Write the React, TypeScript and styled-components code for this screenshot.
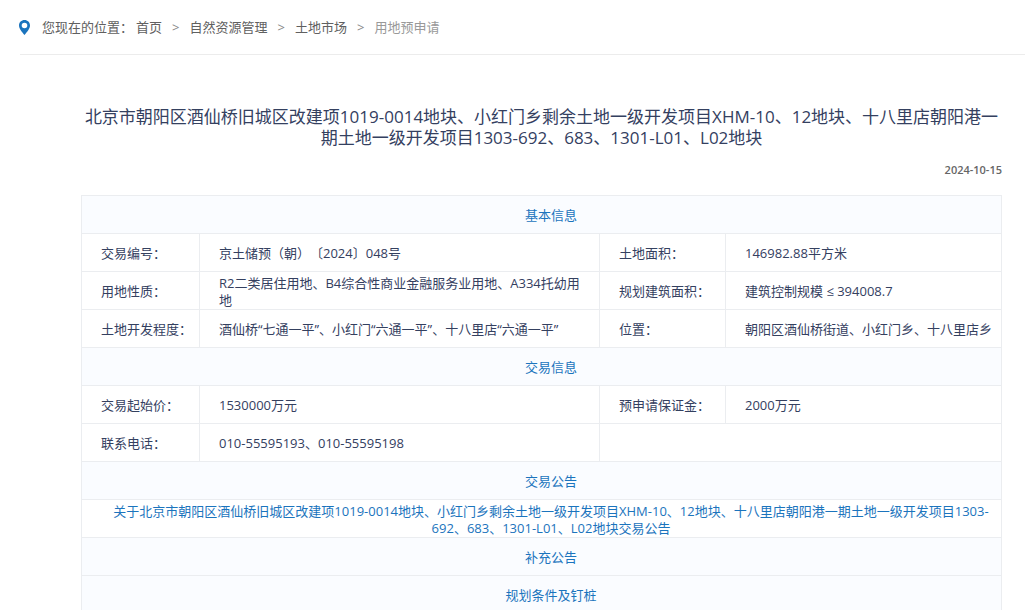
import React from "react";
import styled, { createGlobalStyle } from "styled-components";

const GlobalStyle = createGlobalStyle`
  * {
    box-sizing: border-box;
  }
  body {
    margin: 0;
    background: #fff;
    color: #34405f;
    font-family: "Open Sans", "Noto Sans CJK SC", sans-serif;
    font-size: 13px;
    font-weight: 400;
    line-height: 17px;
    text-spacing-trim: space-all;
  }
`;

const Page = styled.div`
  padding: 0 7px 0 20px;
`;

const Breadcrumb = styled.nav`
  display: flex;
  align-items: center;
  height: 55px;
  border-bottom: 1px solid #ececec;
  color: #606060;
`;

const Pin = styled.svg`
  display: block;
  flex: none;
  width: 11px;
  height: 15px;
  margin: 0 12px 0 -1px;
`;

const CrumbList = styled.ol`
  display: flex;
  gap: 10px;
  margin: 0 0 0 3px;
  padding: 0;
  list-style: none;
`;

const Crumb = styled.li`
  display: flex;
  gap: 10px;

  & + &::before {
    content: ">";
    color: #888;
  }
`;

const CrumbLink = styled.a`
  color: #606060;
  text-decoration: none;
`;

const CurrentCrumb = styled.span`
  color: #999;
`;

const Article = styled.main`
  padding: 51px 23px 0 61px;
`;

const Title = styled.h1`
  margin: 0;
  font-size: 17px;
  font-weight: inherit;
  line-height: 21px;
  text-align: center;
`;

const PublishDate = styled.time`
  display: block;
  margin: 13px 0 17px;
  color: #666;
  font-size: 11px;
  font-weight: 600;
  text-align: right;
`;

const InfoTable = styled.table`
  width: 100%;
  border-collapse: collapse;
  table-layout: fixed;
`;

const Column = styled.col<{ $width?: string }>`
  width: ${({ $width }) => $width ?? "auto"};
`;

const Row = styled.tr`
  height: 38px;
`;

const SectionHead = styled.th`
  padding: 2px 0 0 19px;
  border: 1px solid #ebedf0;
  background: #fafcff;
  color: #1b74bd;
  font-weight: inherit;
  text-align: center;
`;

const LabelCell = styled.th`
  padding: 2px 0 0 19px;
  border: 1px solid #ebedf0;
  font-weight: inherit;
  text-align: left;
`;

const ValueCell = styled.td<{ $wide?: boolean }>`
  padding: 2px ${({ $wide }) => ($wide ? "10px" : "0")} 0 19px;
  border: 1px solid #ebedf0;
`;

const LinkCell = styled.td`
  padding: 2px 0 0 19px;
  border: 1px solid #ebedf0;
  text-align: center;
`;

const NoticeLink = styled.a`
  display: block;
  color: #1b74bd;
  text-decoration: none;
`;

const PROJECT =
  "北京市朝阳区酒仙桥旧城区改建项1019-0014地块、小红门乡剩余土地一级开发项目XHM-10、12地块、十八里店朝阳港一期土地一级开发项目1303-692、683、1301-L01、L02地块";

type Pair = [string, string];

const basicInfo: [Pair, Pair][] = [
  [["交易编号：", "京土储预（朝）〔2024〕048号"], ["土地面积：", "146982.88平方米"]],
  [
    ["用地性质：", "R2二类居住用地、B4综合性商业金融服务业用地、A334托幼用地"],
    ["规划建筑面积：", "建筑控制规模 ≤ 394008.7"],
  ],
  [
    ["土地开发程度：", "酒仙桥“七通一平”、小红门“六通一平”、十八里店“六通一平”"],
    ["位置：", "朝阳区酒仙桥街道、小红门乡、十八里店乡"],
  ],
];

const Section = ({ children }: { children: React.ReactNode }) => (
  <Row>
    <SectionHead colSpan={4}>{children}</SectionHead>
  </Row>
);

const PairRow = ({ left, right }: { left: Pair; right?: Pair }) => (
  <Row>
    <LabelCell scope="row">{left[0]}</LabelCell>
    <ValueCell $wide>{left[1]}</ValueCell>
    {right ? (
      <>
        <LabelCell scope="row">{right[0]}</LabelCell>
        <ValueCell>{right[1]}</ValueCell>
      </>
    ) : (
      <ValueCell colSpan={2} />
    )}
  </Row>
);

export default function App() {
  return (
    <>
      <GlobalStyle />
      <Page>
        <Breadcrumb>
          <Pin viewBox="0 0 11 15" aria-hidden="true">
            <path
              fill="#1b74bd"
              fillRule="evenodd"
              d="M5.5 0C2.4 0 0 2.4 0 5.4c0 3.500 3.300 6.600 5.500 9.600 2.200-3 5.500-6.100 5.500-9.600C11 2.400 8.600 0 5.500 0Zm0 2.700a2.800 2.800 0 1 1 0 5.600 2.800 2.800 0 0 1 0-5.600Z"
            />
          </Pin>
          <span>您现在的位置：</span>
          <CrumbList>
            <Crumb><CrumbLink href="#home">首页</CrumbLink></Crumb>
            <Crumb><CrumbLink href="#resources">自然资源管理</CrumbLink></Crumb>
            <Crumb><CrumbLink href="#market">土地市场</CrumbLink></Crumb>
            <Crumb><CurrentCrumb>用地预申请</CurrentCrumb></Crumb>
          </CrumbList>
        </Breadcrumb>
        <Article>
          <Title>{PROJECT}</Title>
          <PublishDate dateTime="2024-10-15">2024-10-15</PublishDate>
          <InfoTable>
            <colgroup>
              <Column $width="118px" />
              <Column />
              <Column $width="126px" />
              <Column $width="30%" />
            </colgroup>
            <tbody>
              <Section>基本信息</Section>
              {basicInfo.map(([left, right]) => (
                <PairRow key={left[0]} left={left} right={right} />
              ))}
              <Section>交易信息</Section>
              <PairRow left={["交易起始价：", "1530000万元"]} right={["预申请保证金：", "2000万元"]} />
              <PairRow left={["联系电话：", "010-55595193、010-55595198"]} />
              <Section>交易公告</Section>
              <Row>
                <LinkCell colSpan={4}>
                  <NoticeLink href="#notice">{`关于${PROJECT}交易公告`}</NoticeLink>
                </LinkCell>
              </Row>
              <Section>补充公告</Section>
              <Section>规划条件及钉桩</Section>
            </tbody>
          </InfoTable>
        </Article>
      </Page>
    </>
  );
}
